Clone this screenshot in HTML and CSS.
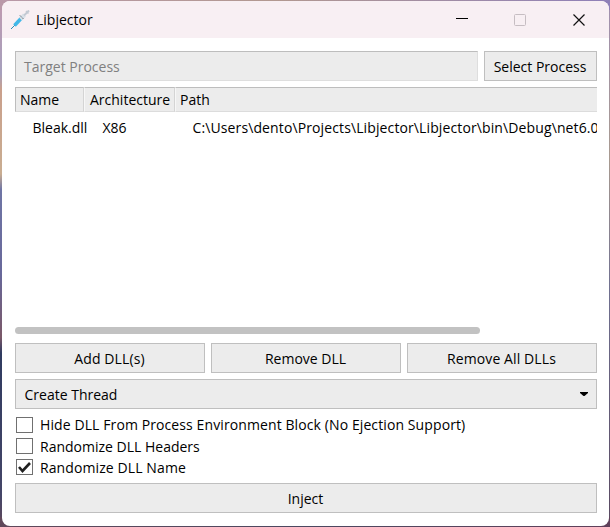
FILE: index.html
```html
<!DOCTYPE html>
<html lang="en">
<head>
<meta charset="utf-8">
<title>Libjector</title>
<link rel="stylesheet" href="styles.css">
</head>
<body>
<div class="window">
  <header class="titlebar">
    <svg class="logo" width="20" height="20" viewBox="0 0 20 20">
      <path d="M1 19 5 15" stroke="#268bb5" stroke-width="1"/>
      <path d="m4.500 15.500 7-7.500" stroke="#42b8e8" stroke-width="3.600"/>
      <path d="m10.500 9 4-4" stroke="#d9e0e8" stroke-width="4"/>
      <path d="m10 5.500 4 4" stroke="#354753" stroke-width="1" stroke-dasharray="1.500 1.500"/>
      <path d="m14 5.500 5-5" stroke="#c3c9d3" stroke-width="2"/>
      <path d="m16 1 2.500 2.500" stroke="#c3c9d3" stroke-width="1.500"/>
    </svg>
    <span class="title">Libjector</span>
    <svg class="controls" width="132" height="14" viewBox="0 0 132 14" fill="none">
      <path d="M0 5.500h12" stroke="#000"/>
      <rect x="58.500" y="1.500" width="11" height="11" rx="1" stroke="#c6bdc2"/>
      <path d="m117.500 1.500 11 11m0-11-11 11" stroke="#111" stroke-width="1.200"/>
    </svg>
  </header>
  <main class="content">
    <div class="target">
      <div class="field"><span>Target Process</span></div>
      <div class="button"><span>Select Process</span></div>
    </div>
    <div class="list">
      <div class="head">
        <div><span>Name</span></div>
        <div><span>Architecture</span></div>
        <div><span>Path</span></div>
      </div>
      <div class="row">
        <span>Bleak.dll</span>
        <span>X86</span>
        <span class="file">C:\Users\dento\Projects\Libjector\Libjector\bin\Debug\net6.0</span>
      </div>
      <div class="scrollbar"></div>
    </div>
    <div class="actions">
      <div class="button"><span class="roomy">Add DLL(s)</span></div>
      <div class="button"><span>Remove DLL</span></div>
      <div class="button"><span class="roomy">Remove All DLLs</span></div>
    </div>
    <div class="button select"><span>Create Thread</span>
      <svg width="8" height="5" viewBox="0 0 8 5"><path d="M0 0h8v1L4.500 4h-1L0 1z"/></svg>
    </div>
    <div class="options">
      <div class="option"><i class="box"></i><span class="roomy">Hide DLL From Process Environment Block (No Ejection Support)</span></div>
      <div class="option"><i class="box"></i><span class="low">Randomize DLL Headers</span></div>
      <div class="option"><i class="box"><svg width="15" height="14" viewBox="0 0 15 14"><path d="m2 7 3.500 4L13 3" fill="none" stroke="#202020" stroke-width="2.600"/></svg></i><span class="roomy low">Randomize DLL Name</span></div>
    </div>
    <div class="button"><span>Inject</span></div>
  </main>
</div>
</body>
</html>
```
FILE: styles.css
```css
* { box-sizing: border-box; }
body {
  margin: 0; width: 610px; height: 527px; padding: 1px 1px 1px 2px; overflow: hidden;
  font: 14px/20px "Open Sans", sans-serif; color: #000;
  background:
    linear-gradient(90deg, #b998a8, #b29890 45%, #8f80b8) top / 100% 10px no-repeat,
    linear-gradient(90deg, #60485a, #4b4860 50%, #60405a) bottom / 100% 10px no-repeat,
    linear-gradient(#a08fb0, #a89a90 30%, #707090 55%, #584860) right / 4px 100% no-repeat,
    linear-gradient(#c09ab0, #a6a0bd 14%, #caa08c 17%, #c9ad91 33%, #6f75a5 36%, #68689a 52%, #7a5868 64%, #303b60 67%, #454668 94%, #60485a);
}
span { white-space: nowrap; }
.roomy { letter-spacing: 0.1px; }
.file { letter-spacing: 0.115px; }
.window { width: 607px; height: 525px; background: #fff; border-radius: 8px; overflow: hidden; }
.titlebar { height: 37px; background: #f8eff3; display: flex; align-items: center; padding-left: 8px; }
.logo { fill: none; margin-right: 6px; }
.controls { margin: 0 21px 0 auto; }
.content { padding: 13px 12px 13px 13px; display: flex; flex-direction: column; gap: 6px; }
.target { display: grid; grid-template-columns: 463px 113px; gap: 6px; }
.field, .button { height: 30px; background: #ececec; border: 1px solid #bfbfbf; display: flex; align-items: center; }
.field { padding-left: 8px; color: #808080; border-color: #bdbdbd #dedede #dedede #bdbdbd; }
.field span, .button span { padding-top: 2px; }
.button { justify-content: center; padding-right: 1px; }
.list { height: 250px; overflow: hidden; display: flex; flex-direction: column; }
.head { display: grid; grid-template-columns: 69px 91px 1fr; height: 25px; flex: none; }
.head div { background: #ececec; border-top: 1px solid #bdbdbd; border-bottom: 1px solid #dcdcdc; border-right: 1px solid #d4d4d4; padding: 2px 0 0 4px; }
.head div:first-child { border-left: 1px solid #bdbdbd; }
.head div + div { border-left: 1px solid #f7f7f7; }
.head div:nth-child(2) { padding-left: 5px; }
.head div:last-child { border-right: 0; }
.row { display: grid; grid-template-columns: 70px 90px 420px; padding: 6px 0 0 17.5px; }
.scrollbar { width: 465px; height: 7px; margin-top: auto; margin-bottom: 3px; border-radius: 4px; background: #c2c2c2; flex: none; }
.actions { display: grid; grid-template-columns: repeat(3, 1fr); gap: 6px; }
.select { justify-content: space-between; padding: 0 8px 0 8.5px; }
.options { height: 62px; padding: 0 0 0 1px; }
.option { height: 21px; display: flex; align-items: flex-start; gap: 7px; }
.low { padding-top: 1px; }
.box { width: 17px; height: 16px; margin-top: 2px; background: #fff; border: 1px solid #707070; display: flex; }
```
